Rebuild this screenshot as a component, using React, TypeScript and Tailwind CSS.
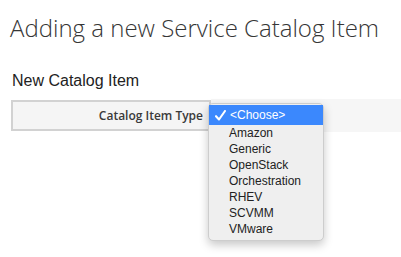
const options = ['Amazon', 'Generic', 'OpenStack', 'Orchestration', 'RHEV', 'SCVMM', 'VMware'];

function CatalogTypeMenu() {
  return (
    <div className="absolute left-[208px] top-[103px] w-[116px] rounded-[5px] border border-[#cdcdcd] bg-[#efefef] pb-[3px] pt-px shadow-[0_4px_10px_rgba(0,0,0,0.22)] font-['Liberation_Sans',Arial,sans-serif] text-[12px] text-[#222]">
      <div className="flex h-[20px] items-center bg-[#3b88fd] text-white">
        <span className="flex w-[21px] justify-center pl-[2px]">
          <svg width="11" height="11" viewBox="0 0 11 11" fill="none">
            <path d="M1 6.2 L4 9.5 L10 1" stroke="white" strokeWidth="2.1" strokeLinecap="round" strokeLinejoin="round" />
          </svg>
        </span>
        <span>&lt;Choose&gt;</span>
      </div>
      {options.map((o) => (
        <div key={o} className="flex h-[16px] items-center pl-[20px]">
          {o}
        </div>
      ))}
    </div>
  );
}

export default function App() {
  return (
    <div className="relative h-[257px] w-[401px] overflow-hidden bg-white">
      <h1 className="pl-[10px] pt-[13px] font-['Open_Sans',sans-serif] text-[24px] font-light leading-[30px] text-[#363636]">
        Adding a new Service Catalog Item
      </h1>
      <h2 className="mt-[29px] pl-[12px] font-['Liberation_Sans',Arial,sans-serif] text-[16px] leading-[18px] text-[#222]">
        New Catalog Item
      </h2>
      <div className="mt-[9px] flex h-[33px] pl-[11px]">
        <div className="my-px flex w-[200px] items-center justify-end border-2 border-[#d2d2d2] bg-[#f5f5f5] pr-[6px] font-['Open_Sans',sans-serif] text-[12px] font-semibold text-[#3a3a3a]">
          Catalog Item Type
        </div>
        <div className="flex-1 bg-[#f6f6f6]" />
      </div>
      <CatalogTypeMenu />
    </div>
  );
}
